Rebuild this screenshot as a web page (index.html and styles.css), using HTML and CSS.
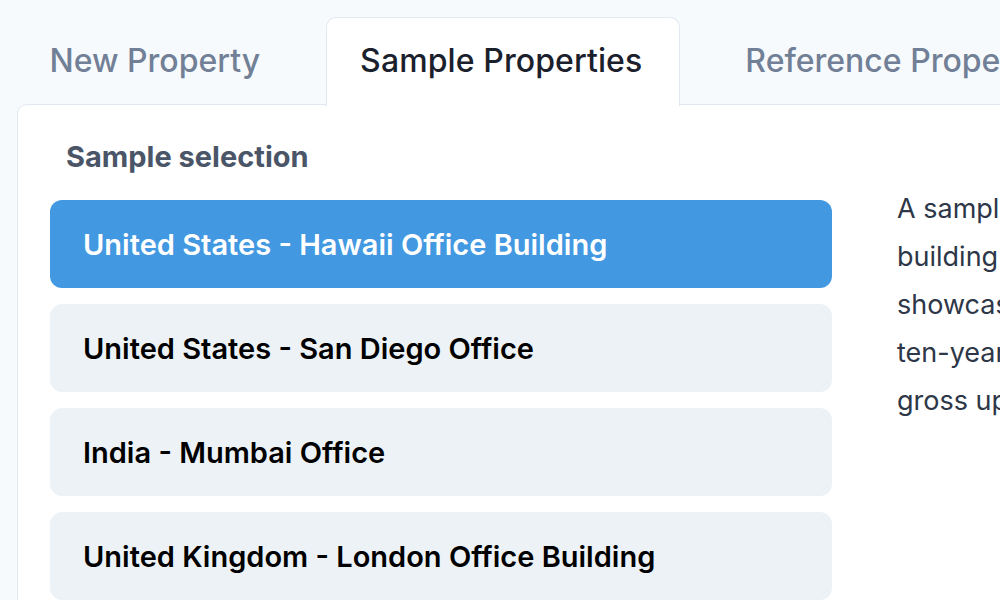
FILE: index.html
```html
<!DOCTYPE html>
<html lang="en">
<head>
<meta charset="utf-8">
<title>Sample Properties</title>
<link rel="stylesheet" href="styles.css">
</head>
<body>
<div class="page">
  <div class="tabs">
    <div class="tab">New Property</div>
    <div class="tab active">Sample Properties</div>
    <div class="tab">Reference Properties</div>
  </div>
  <div class="panel">
    <div class="list-col">
      <h2 class="heading">Sample selection</h2>
      <div class="list">
        <div class="item selected">United States - Hawaii Office Building</div>
        <div class="item">United States - San Diego Office</div>
        <div class="item">India - Mumbai Office</div>
        <div class="item">United Kingdom - London Office Building</div>
      </div>
    </div>
    <div class="desc-col">
      <p class="desc">A sample office<br>building in Honolulu<br>showcasing a typical<br>ten-year lease with<br>gross up provisions.</p>
    </div>
  </div>
</div>
</body>
</html>
```

FILE: styles.css
```css
html, body {
  margin: 0;
  padding: 0;
  background: #f7fafc;
  overflow: hidden;
}
body {
  font-family: Inter, "Noto Sans", sans-serif;
  width: 1000px;
  height: 600px;
}
.page {
  padding: 17px 0 0 17px;
  width: 1500px;
}
.tabs {
  display: flex;
  gap: 31px;
  margin: 0 0 -1.5px -2px;
  position: relative;
  z-index: 1;
}
.tab {
  font-size: 32px;
  font-weight: 500;
  color: #718096;
  line-height: 40px;
  padding: 23px 33.5px 24.5px 33.5px;
  border: 1.5px solid transparent;
  border-bottom: none;
  border-radius: 10px 10px 0 0;
}
.tab.active {
  background: #fff;
  color: #1a202c;
  border-color: #e2e8f0;
  padding-right: 36.5px;
  letter-spacing: 0.1px;
}
.panel {
  background: #fff;
  border: 1.5px solid #e2e8f0;
  border-radius: 10px 0 0 0;
  padding: 32px 0 0 32px;
  display: flex;
  gap: 65px;
  height: 600px;
}
.list-col {
  width: 782px;
}
.heading {
  margin: 0 0 23px 16px;
  font-size: 29px;
  font-weight: 700;
  line-height: 40px;
  color: #4a5568;
}
.list {
  display: flex;
  flex-direction: column;
  gap: 16px;
}
.item {
  height: 88px;
  display: flex;
  align-items: center;
  padding-left: 33px;
  border-radius: 12px;
  background: #edf2f7;
  color: #000;
  font-size: 29px;
  font-weight: 600;
}
.item.selected {
  background: #4299e1;
  color: #fff;
}
.desc-col {
  padding-top: 48px;
  width: 360px;
}
.desc {
  margin: 0;
  font-size: 27px;
  line-height: 48px;
  color: #2d3748;
}
```
